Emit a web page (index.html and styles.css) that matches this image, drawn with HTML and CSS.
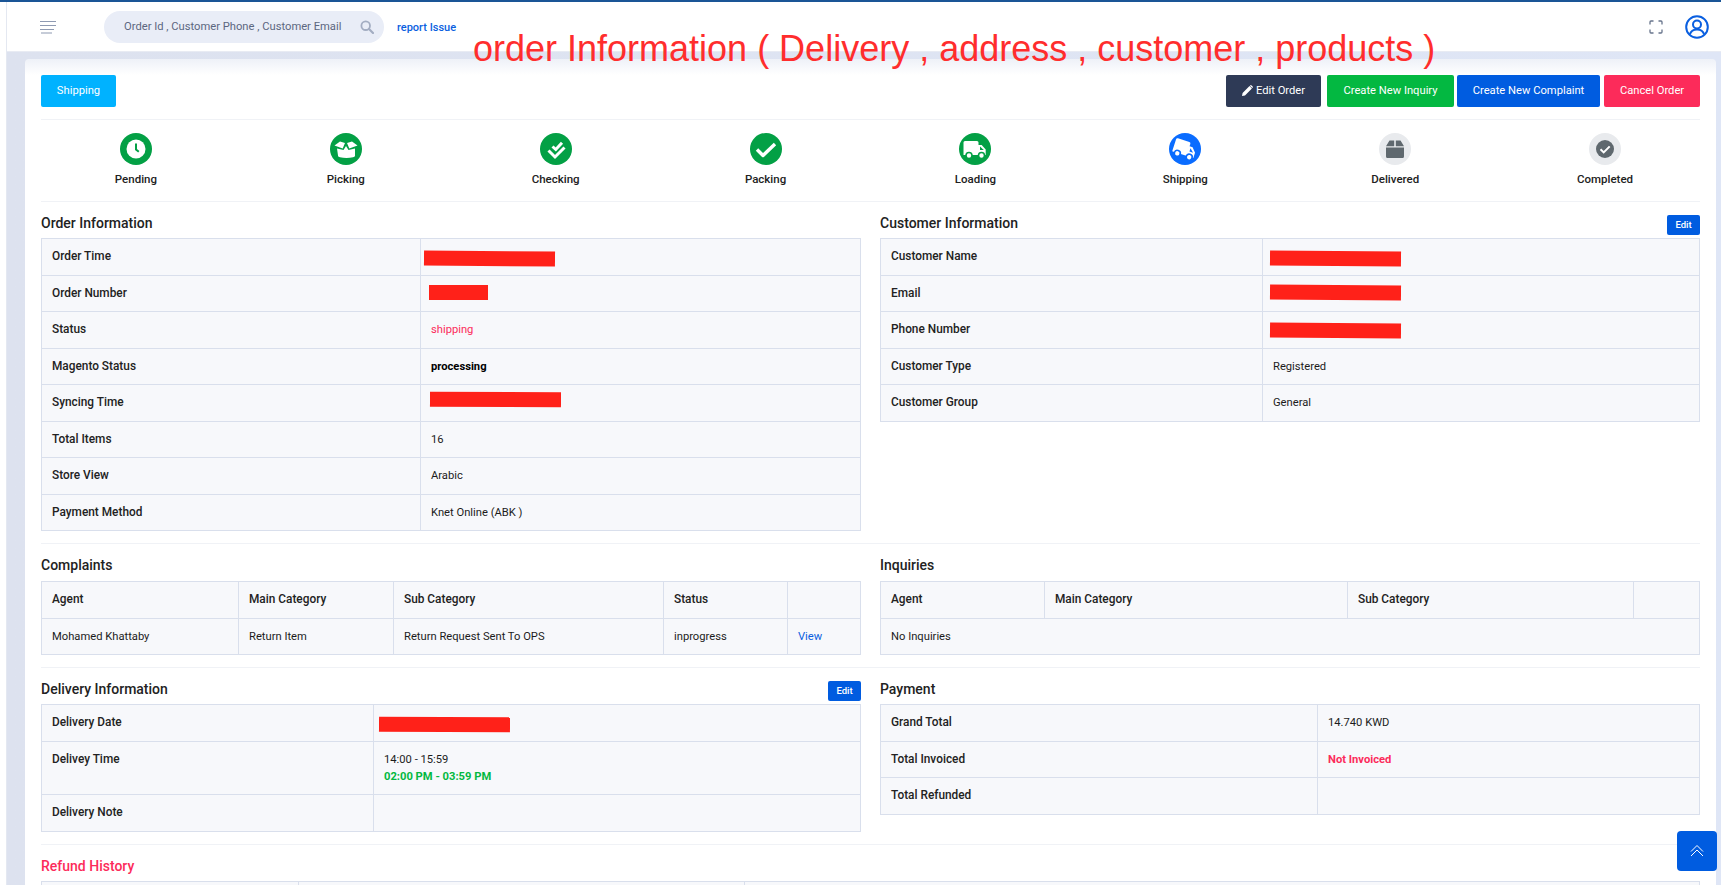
FILE: index.html
```html
<!DOCTYPE html>
<html lang="en">
<head>
<meta charset="utf-8">
<title>Order Information</title>
<link rel="stylesheet" href="styles.css">
</head>
<body>
<div class="topline"></div>
<div class="shell">
  <aside class="rail"></aside>
  <div class="main">
    <header class="topbar">
      <svg class="burger" width="16" height="14" viewBox="0 0 16 14"><path d="M0 1.5h16M0 5.5h16M0 9.5h14M1 13h11" fill="none" stroke="#8e9ab2" stroke-width="1.2"/></svg>
      <div class="search">
        <span class="search-text">Order Id , Customer Phone , Customer Email</span>
        <svg width="14" height="14" viewBox="0 0 14 14"><circle cx="5.7" cy="5.7" r="4.3" fill="none" stroke="#a3adc2" stroke-width="1.8"/><path d="M9 9l4 4" stroke="#a3adc2" stroke-width="2.2" stroke-linecap="round"/></svg>
      </div>
      <a class="report">report Issue</a>
      <div class="topbar-right">
        <svg width="14" height="14" viewBox="0 0 14 14"><path d="M1 4.5V2a1 1 0 0 1 1-1h2.5M9.5 1H12a1 1 0 0 1 1 1v2.5M13 9.5V12a1 1 0 0 1-1 1H9.5M4.5 13H2a1 1 0 0 1-1-1V9.5" fill="none" stroke="#67748c" stroke-width="1.3"/></svg>
        <svg width="24" height="24" viewBox="0 0 24 24"><circle cx="12" cy="12" r="10.8" fill="none" stroke="#0a5fe0" stroke-width="2"/><circle cx="12" cy="9.5" r="4" fill="none" stroke="#0a5fe0" stroke-width="2"/><path d="M4.8 19.5c1-3.3 3.6-5 7.2-5s6.2 1.700 7.200 5" fill="none" stroke="#0a5fe0" stroke-width="2"/></svg>
      </div>
    </header>

    <main class="card">
      <div class="toolbar">
        <button class="btn btn-cyan btn-state">Shipping</button>
        <div class="actions">
          <button class="btn btn-dark btn-edit"><svg width="11" height="11" viewBox="0 0 11 11"><path d="M0 11l.6-3L7.500 1.100l2.400 2.400L3 10.400zM8.200.4a1 1 0 0 1 1.400 0l1 1a1 1 0 0 1 0 1.400l-.3.300-2.400-2.400z" fill="#fff"/></svg>Edit Order</button>
          <button class="btn btn-green btn-inq">Create New Inquiry</button>
          <button class="btn btn-blue btn-comp">Create New Complaint</button>
          <button class="btn btn-red btn-cancel">Cancel Order</button>
        </div>
      </div>
      <hr class="rule">

      <div class="steps">
        <div class="step"><svg class="dot" viewBox="0 0 32 32"><circle cx="16" cy="16" r="16" fill="#03a045"/><circle cx="16" cy="16" r="9.500" fill="#fff"/><path d="M16 10.500v6l2.800 2.300" fill="none" stroke="#03a045" stroke-width="2"/></svg><span>Pending</span></div>
        <div class="step"><svg class="dot" viewBox="0 0 32 32"><circle cx="16" cy="16" r="16" fill="#03a045"/><path d="M4.500 12.500L10 8.500l5 1.500-2.300 5.500zM27.500 12.500L22 8.500l-5 1.500 2.300 5.500z" fill="#fff"/><path d="M7 15.500l6.500 1.500 2.500-4 2.500 4 6.500-1.500v7c0 1-1 1.500-2 1.800-4 1-9 1-13 0-1-.3-2-.8-2-1.800z" fill="#fff"/></svg><span>Picking</span></div>
        <div class="step"><svg class="dot" viewBox="0 0 32 32"><circle cx="16" cy="16" r="16" fill="#03a045"/><path d="M12.500 13.500l3.300 3L22 9.800M8.500 17.500l6.500 6.500 9.500-9.500" fill="none" stroke="#fff" stroke-width="3"/></svg><span>Checking</span></div>
        <div class="step"><svg class="dot" viewBox="0 0 32 32"><circle cx="16" cy="16" r="16" fill="#03a045"/><path d="M7 16.500l6 6L25 11" fill="none" stroke="#fff" stroke-width="3.400" stroke-linejoin="round"/></svg><span>Packing</span></div>
        <div class="step"><svg class="dot" viewBox="0 0 32 32"><circle cx="16" cy="16" r="16" fill="#03a045"/><path d="M6 8h12a1.500 1.500 0 0 1 1.500 1.500V12h3.200l4 4.500V22H4.500V9.500A1.500 1.500 0 0 1 6 8z" fill="#fff"/><path d="M21 13.500v3.500h3.800z" fill="#03a045"/><circle cx="10" cy="22.500" r="3" fill="#fff" stroke="#03a045" stroke-width="1.600"/><circle cx="22.500" cy="22.500" r="3" fill="#fff" stroke="#03a045" stroke-width="1.600"/></svg><span>Loading</span></div>
        <div class="step"><svg class="dot" viewBox="0 0 32 32"><circle cx="16" cy="16" r="16" fill="#0a6cff"/><g transform="rotate(18 16 16)"><path d="M6 8h12a1.500 1.500 0 0 1 1.500 1.500V12h3.200l4 4.500V22H4.500V9.500A1.500 1.500 0 0 1 6 8z" fill="#fff"/><path d="M21 13.500v3.500h3.800z" fill="#0a6cff"/><circle cx="10" cy="22.500" r="3" fill="#fff" stroke="#0a6cff" stroke-width="1.600"/><circle cx="22.500" cy="22.500" r="3" fill="#fff" stroke="#0a6cff" stroke-width="1.600"/></g></svg><span>Shipping</span></div>
        <div class="step"><svg class="dot" viewBox="0 0 32 32"><circle cx="16" cy="16" r="16" fill="#e8eaed"/><path d="M10.500 7.500h4.700v5.800H7zM16.800 7.500h4.700l3.500 5.800h-8.200zM7 14.500h18v9a1.500 1.500 0 0 1-1.500 1.500h-15A1.500 1.500 0 0 1 7 23.500z" fill="#5f686e"/></svg><span>Delivered</span></div>
        <div class="step"><svg class="dot" viewBox="0 0 32 32"><circle cx="16" cy="16" r="16" fill="#e8eaed"/><circle cx="16" cy="16" r="9" fill="#5f686e"/><path d="M11.500 16.200l3.200 3.200 6-6" fill="none" stroke="#fff" stroke-width="2"/></svg><span>Completed</span></div>
      </div>
      <hr class="rule">

      <section class="columns">
        <div class="col">
          <div class="head head-tight"><h3>Order Information</h3></div>
          <table class="grid">
            <colgroup><col class="w-order"><col></colgroup>
            <tr><th>Order Time</th><td><i class="redact r-time"></i></td></tr>
            <tr><th>Order Number</th><td><i class="redact r-num"></i></td></tr>
            <tr><th>Status</th><td class="t-red">shipping</td></tr>
            <tr><th>Magento Status</th><td class="t-bold">processing</td></tr>
            <tr><th>Syncing Time</th><td><i class="redact r-sync"></i></td></tr>
            <tr><th>Total Items</th><td>16</td></tr>
            <tr><th>Store View</th><td>Arabic</td></tr>
            <tr><th>Payment Method</th><td>Knet Online (ABK )</td></tr>
          </table>
        </div>
        <div class="col">
          <div class="head head-tight"><h3>Customer Information</h3><button class="btn btn-blue btn-mini">Edit</button></div>
          <table class="grid">
            <colgroup><col class="w-cust"><col></colgroup>
            <tr><th>Customer Name</th><td><i class="redact r-cust r-name"></i></td></tr>
            <tr><th>Email</th><td><i class="redact r-cust r-mail"></i></td></tr>
            <tr><th>Phone Number</th><td><i class="redact r-cust r-phone"></i></td></tr>
            <tr><th>Customer Type</th><td>Registered</td></tr>
            <tr><th>Customer Group</th><td>General</td></tr>
          </table>
        </div>
      </section>
      <hr class="rule">

      <section class="columns">
        <div class="col">
          <div class="head"><h3>Complaints</h3></div>
          <table class="grid">
            <colgroup><col class="c1"><col class="c2"><col class="c3"><col class="c4"><col></colgroup>
            <tr><th>Agent</th><th>Main Category</th><th>Sub Category</th><th>Status</th><th></th></tr>
            <tr><td>Mohamed Khattaby</td><td>Return Item</td><td>Return Request Sent To OPS</td><td>inprogress</td><td><a class="link">View</a></td></tr>
          </table>
        </div>
        <div class="col">
          <div class="head"><h3>Inquiries</h3></div>
          <table class="grid">
            <colgroup><col class="i1"><col class="i2"><col class="i3"><col></colgroup>
            <tr><th>Agent</th><th>Main Category</th><th>Sub Category</th><th></th></tr>
            <tr><td colspan="4">No Inquiries</td></tr>
          </table>
        </div>
      </section>
      <hr class="rule">

      <section class="columns">
        <div class="col">
          <div class="head head-tight"><h3>Delivery Information</h3><button class="btn btn-blue btn-mini">Edit</button></div>
          <table class="grid">
            <colgroup><col class="w-del"><col></colgroup>
            <tr><th>Delivery Date</th><td><i class="redact r-del"></i></td></tr>
            <tr><th>Delivey Time</th><td>14:00 - 15:59<br><b class="t-green">02:00 PM - 03:59 PM</b></td></tr>
            <tr><th>Delivery Note</th><td></td></tr>
          </table>
        </div>
        <div class="col">
          <div class="head head-tight"><h3>Payment</h3></div>
          <table class="grid">
            <colgroup><col class="w-pay"><col></colgroup>
            <tr><th>Grand Total</th><td>14.740 KWD</td></tr>
            <tr><th>Total Invoiced</th><td class="t-red t-strong">Not Invoiced</td></tr>
            <tr><th>Total Refunded</th><td></td></tr>
          </table>
        </div>
      </section>
      <hr class="rule">

      <div class="head head-tight"><h3 class="t-red">Refund History</h3></div>
      <table class="grid">
        <colgroup><col class="r1"><col class="r2"><col></colgroup>
        <tr><th></th><th></th><th></th></tr>
      </table>
    </main>
  </div>
</div>

<div class="annotation">order Information ( Delivery , address , customer , products )</div>

<button class="to-top"><svg width="14" height="12" viewBox="0 0 14 12"><path d="M1 6.500l6-6 6 6M1 11l6-6 6 6" fill="none" stroke="#fff" stroke-width="1"/></svg></button>
</body>
</html>
```
FILE: styles.css
```css
* { box-sizing: border-box; }
html, body { margin: 0; height: 885px; overflow: hidden; }
body { font-family: Roboto, "Liberation Sans", sans-serif; font-size: 12px; color: #222; background: #dfe5f3; }
.topline { height: 2px; background: #1a5596; }
.shell { display: flex; height: 883px; }
.rail { width: 7px; background: #fff; border-right: 1px solid #e4e8f1; flex: none; }
.main { flex: 1; min-width: 0; background: linear-gradient(90deg, #dde2ef, #dfe6f6); }

.topbar { height: 50px; background: #fff; display: flex; align-items: center; padding: 0 12px 0 33px; border-bottom: 1px solid #e8ebf3; }
.burger { margin-top: 1px; }
.search { width: 280px; height: 32px; margin-left: 48px; border-radius: 16px; background: #e9edf7; display: flex; align-items: center; justify-content: space-between; padding: 0 10px 0 20px; }
.search-text { color: #5c6780; font-size: 11.2px; }
.report { margin: 2px 0 0 13px; color: #0a5fe0; font-size: 11px; font-weight: 500; }
.topbar-right { margin-left: auto; display: flex; align-items: center; gap: 22px; }
.topbar-right svg { display: block; }

.card { margin: 7px 5px 0 18px; padding: 16px 16px 0; height: 826px; overflow: hidden; background: linear-gradient(180deg, #eef1f8 0, #fff 16px); border-radius: 4px 4px 0 0; }
.toolbar { display: flex; justify-content: space-between; height: 32px; }
.actions { display: flex; }
.btn { border: 0; border-radius: 2px; color: #fff; font: 400 11.2px Roboto, sans-serif; height: 32px; padding: 0 0 2px; display: inline-flex; align-items: center; justify-content: center; gap: 3px; }
.btn-cyan { background: #00b2ff; }
.btn-dark { background: #2e3a56; }
.btn-green { background: #03b841; }
.btn-blue { background: #005ce0; }
.btn-red { background: #fc2b5a; }
.btn-state { width: 75px; }
.btn-edit { width: 95px; margin-right: 6px; }
.btn-inq { width: 127px; margin-right: 3px; }
.btn-comp { width: 143px; margin-right: 4px; }
.btn-cancel { width: 96px; }
.btn-mini { width: 33px; height: 20px; font-size: 9.5px; font-weight: 500; margin-top: 13px; }

.rule { border: 0; height: 1px; background: #f0f2f6; margin: 12px 0 0; }

.steps { display: grid; grid-template-columns: repeat(8, 1fr); margin: 13px -10px 0; height: 56px; }
.step { display: flex; flex-direction: column; align-items: center; font-weight: 500; font-size: 11.5px; line-height: 17px; color: #222; }
.dot { width: 32px; height: 32px; display: block; margin-bottom: 6px; }

.columns { display: grid; grid-template-columns: 820px 820px; column-gap: 19px; }
.head { display: flex; justify-content: space-between; height: 37px; }
.head-tight { height: 36px; }
h3 { margin: 0; padding-top: 12px; font-size: 14px; line-height: 18px; font-weight: 500; color: #222; }

.grid { width: 100%; table-layout: fixed; border-collapse: collapse; background: #f7f8fb; }
.grid th, .grid td { border: 1px solid #d9dfec; padding: 9.25px 10px; line-height: 17px; text-align: left; vertical-align: top; }
.grid th { font-size: 11.85px; font-weight: 500; color: #222; }
.grid td { font-size: 11.2px; font-weight: 400; color: #1c1c1c; }

.w-order { width: 379px; }
.w-cust { width: 382px; }
.w-del { width: 332px; }
.w-pay { width: 437px; }
.c1 { width: 197px; } .c2 { width: 155px; } .c3 { width: 270px; } .c4 { width: 124px; }
.i1 { width: 164px; } .i2 { width: 303px; } .i3 { width: 286px; }
.r1 { width: 257px; } .r2 { width: 446px; }

.t-red { color: #fc2b5a !important; }
.t-bold { font-weight: 700 !important; color: #000 !important; }
.t-strong { font-weight: 700 !important; }
.t-green { color: #03b841; font-weight: 700; }
.link { color: #0a5fe0; }

.redact { display: block; height: 15px; background: #ff2119; position: relative; }
.r-time { width: 131px; left: -7px; top: 3px; transform: rotate(.4deg); }
.r-num { width: 59px; left: -2px; top: 0; }
.r-sync { width: 131px; left: -1px; top: -2px; transform: rotate(.2deg); }
.r-cust { width: 131px; left: -3px; transform: rotate(.4deg); }
.r-name { top: 3px; }
.r-mail { top: 0; }
.r-phone { top: 1.5px; }
.r-del { width: 131px; left: -5px; top: 3px; transform: rotate(.3deg); }

.annotation { position: absolute; left: 473px; top: 26px; font-family: "Liberation Sans", Arial, sans-serif; font-size: 36px; line-height: 46px; color: #ff2d2d; white-space: nowrap; }
.to-top { position: fixed; left: 1677px; top: 831px; width: 40px; height: 40px; border: 0; border-radius: 4px; background: #005ce0; display: flex; align-items: center; justify-content: center; padding: 0; }
```
